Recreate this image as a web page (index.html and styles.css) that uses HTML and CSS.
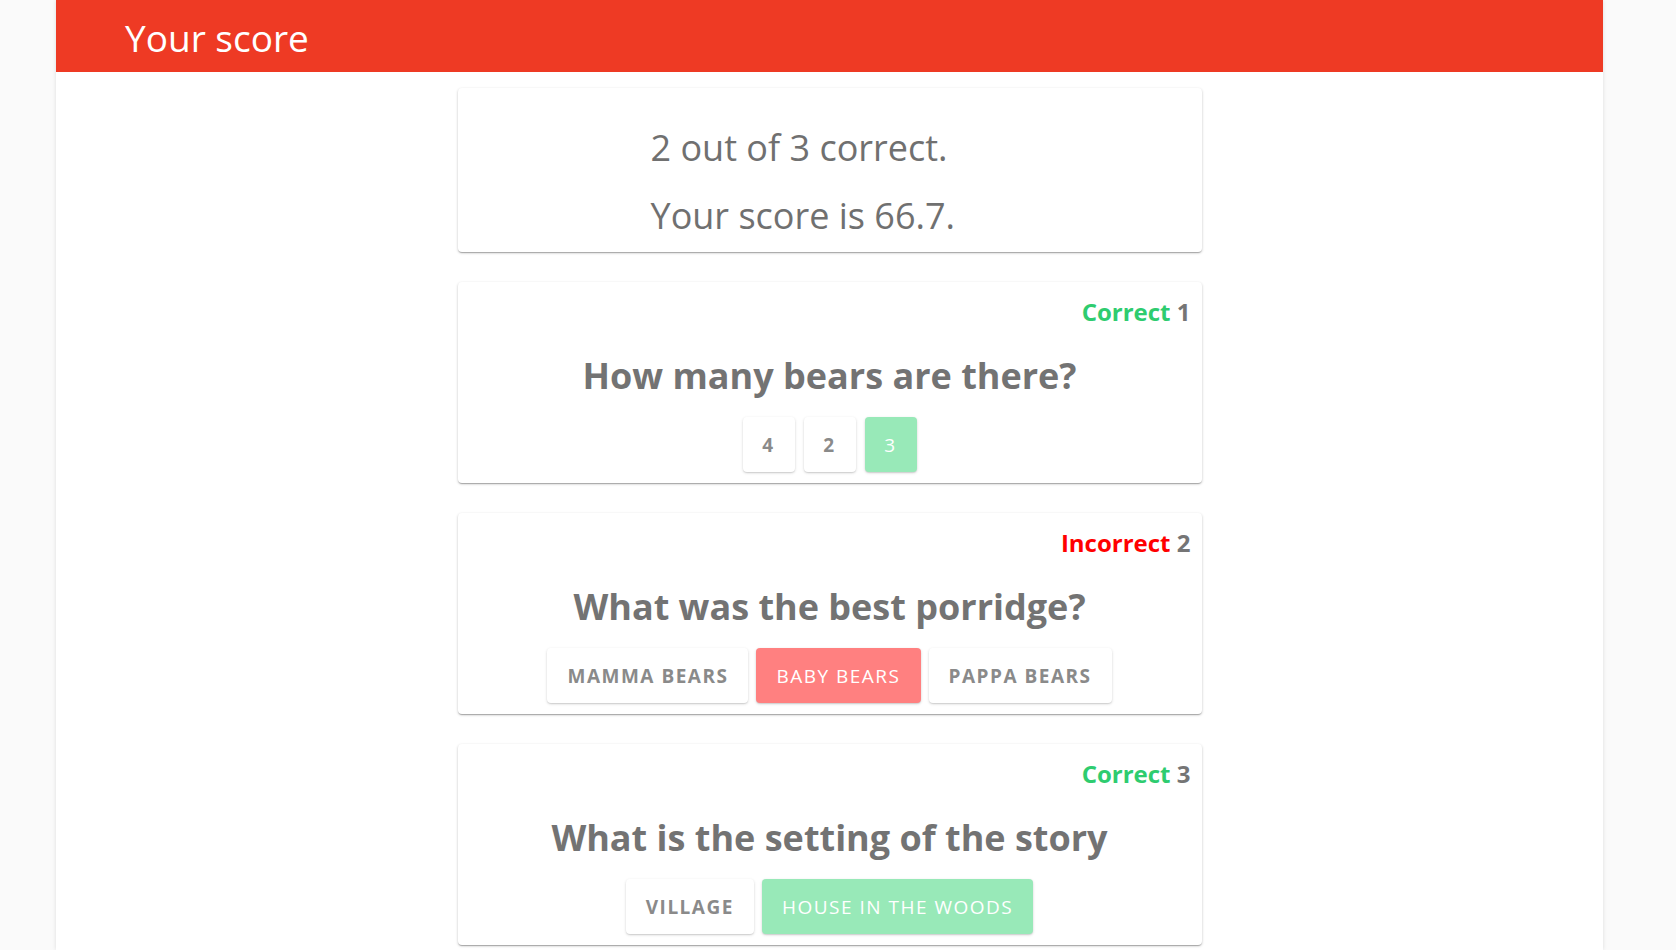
FILE: index.html
```html
<!DOCTYPE html>
<html>
<head>
<meta charset="utf-8">
<title>Your score</title>
<link rel="stylesheet" href="styles.css">
</head>
<body>
<div class="panel">
  <header class="header"><h1 class="title">Your score</h1></header>
  <main class="content">
    <section class="card score-card">
      <p class="score-line">2 out of 3 correct.</p>
      <p class="score-line">Your score is 66.7.</p>
    </section>
    <section class="card q-card">
      <div class="status"><span class="ok">Correct</span> <span class="num">1</span></div>
      <h2 class="question">How many bears are there?</h2>
      <div class="answers answers-sq">
        <button class="btn btn-sq">4</button>
        <button class="btn btn-sq">2</button>
        <button class="btn btn-sq sel-ok">3</button>
      </div>
    </section>
    <section class="card q-card">
      <div class="status"><span class="bad">Incorrect</span> <span class="num">2</span></div>
      <h2 class="question">What was the best porridge?</h2>
      <div class="answers">
        <button class="btn">Mamma bears</button>
        <button class="btn sel-bad">Baby bears</button>
        <button class="btn">Pappa bears</button>
      </div>
    </section>
    <section class="card q-card">
      <div class="status"><span class="ok">Correct</span> <span class="num">3</span></div>
      <h2 class="question">What is the setting of the story</h2>
      <div class="answers">
        <button class="btn">Village</button>
        <button class="btn sel-ok">House in the woods</button>
      </div>
    </section>
  </main>
</div>
</body>
</html>
```

FILE: styles.css
```css
html, body {
  margin: 0;
  padding: 0;
}
body {
  background: #fafafa;
  font-family: "Open Sans", "Noto Sans", "Liberation Sans", sans-serif;
  color: #757575;
  height: 950px;
  overflow: hidden;
}
.panel {
  margin-left: 56px;
  width: 1547px;
  min-height: 950px;
  background: #ffffff;
  box-shadow: 0 0 4px rgba(0,0,0,0.12);
}
.header {
  height: 72px;
  background: #ee3a24;
  display: flex;
  align-items: center;
}
.title {
  margin: 4px 0 0 69px;
  font-size: 37px;
  font-weight: 400;
  color: #ffffff;
  line-height: 68px;
}
.content {
  display: flex;
  flex-direction: column;
  align-items: center;
  gap: 30px;
  padding-top: 16px;
}
.card {
  width: 744px;
  box-sizing: border-box;
  background: #ffffff;
  border-radius: 4px;
  box-shadow: 0 1px 3px rgba(0,0,0,0.2), 0 1px 1px rgba(0,0,0,0.14), 0 2px 1px -1px rgba(0,0,0,0.12);
}
.score-card {
  height: 164px;
  padding: 26px 0 0 193px;
}
.score-line {
  margin: 0;
  font-size: 36px;
  line-height: 68px;
  color: #707070;
}
.q-card {
  height: 201px;
  padding: 15px 11px 11px 11px;
  display: flex;
  flex-direction: column;
  align-items: center;
}
.status {
  align-self: flex-end;
  font-size: 24px;
  font-weight: 700;
  line-height: 30px;
  color: #757575;
}
.ok { color: #2ecc6f; }
.bad { color: #ff0000; }
.question {
  margin: 24px 0 0 0;
  font-size: 36px;
  font-weight: 700;
  line-height: 50px;
  color: #737373;
}
.answers {
  margin-top: 16px;
  display: flex;
  gap: 8px;
}
.answers-sq {
  gap: 9px;
}
.btn {
  height: 55px;
  min-width: 52px;
  padding: 0 20px;
  border: none;
  border-radius: 4px;
  background: #ffffff;
  font-family: inherit;
  font-size: 19px;
  font-weight: 700;
  letter-spacing: 1.5px;
  text-transform: uppercase;
  color: #8a8a8a;
  box-shadow: 0 1px 3px rgba(0,0,0,0.16), 0 1px 1px rgba(0,0,0,0.08);
}
.btn-sq {
  padding: 0;
  width: 52px;
}
.sel-ok {
  background: #98e9b8;
  color: #ffffff;
  font-weight: 400;
}
.sel-bad {
  background: #ff8080;
  color: #ffffff;
  font-weight: 400;
}
```
